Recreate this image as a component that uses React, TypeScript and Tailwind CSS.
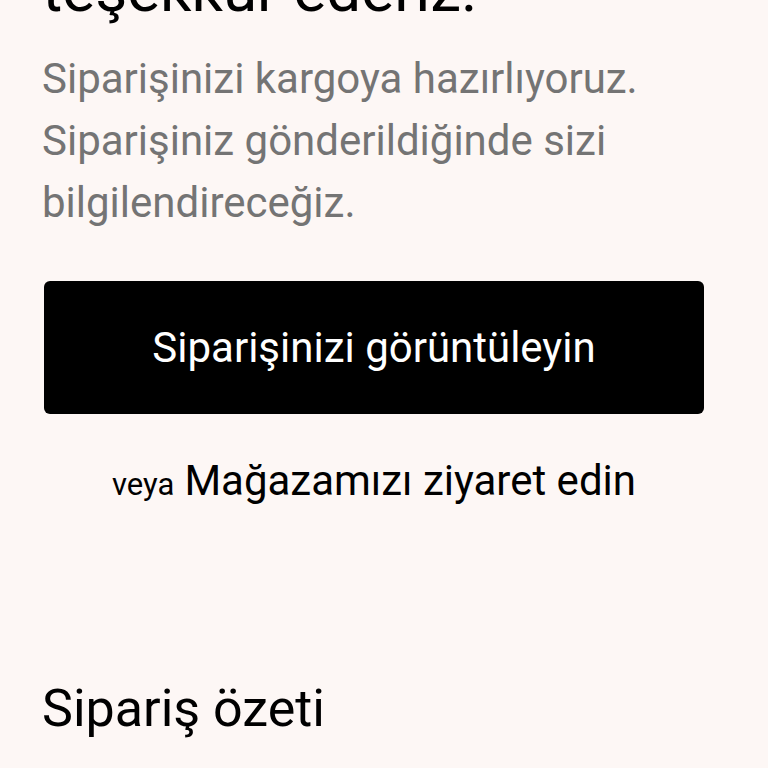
import React from "react";

export default function App() {
  return (
    <div
      className="w-[768px] h-[768px] overflow-hidden bg-[#fdf7f5]"
      style={{ fontFamily: "Roboto, 'Noto Sans', sans-serif" }}
    >
      <div className="pl-[42px] w-[706px] flex flex-col">
        <h1 className="mt-[-121px] text-[62px] leading-[74.4px] font-normal text-black">
          Siparişiniz için
          <br />
          teşekkür ederiz.
        </h1>
        <p className="mt-[20px] text-[42px] leading-[62px] text-[#747474]">
          Siparişinizi kargoya hazırlıyoruz.
          <br />
          Siparişiniz gönderildiğinde sizi
          <br />
          bilgilendireceğiz.
        </p>
        <button className="mt-[47px] ml-[2px] w-[660px] h-[133px] rounded-[6px] bg-black text-white text-[42px] flex items-center justify-center">
          Siparişinizi görüntüleyin
        </button>
        <div className="mt-[43px] ml-[2px] w-[660px] flex items-baseline justify-center leading-[48px] text-black">
          <span className="text-[31px]">veya</span>
          <span className="text-[42px] ml-[10px]">Mağazamızı ziyaret edin</span>
        </div>
        <h2 className="mt-[169px] text-[52px] leading-[62px] font-normal text-black">
          Sipariş özeti
        </h2>
      </div>
    </div>
  );
}
